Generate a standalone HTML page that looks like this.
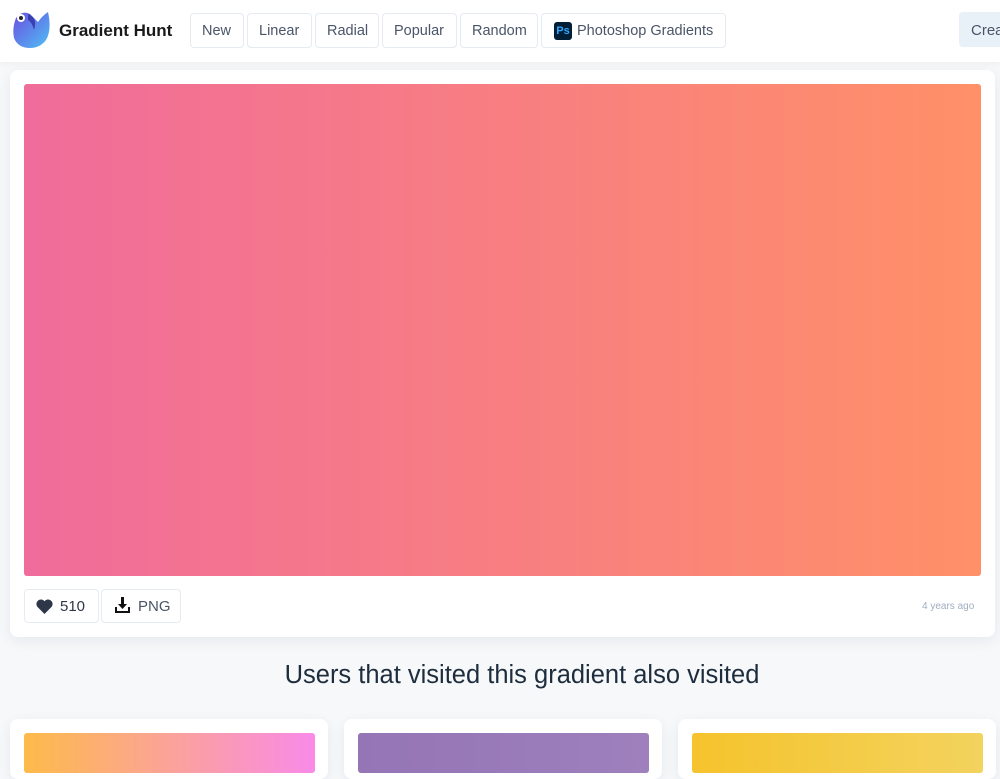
<!DOCTYPE html>
<html><head><style>
*{box-sizing:border-box;margin:0;padding:0}
body{width:1000px;height:758px;overflow:hidden;background:#f6f8fa;font-family:"Liberation Sans",sans-serif;position:relative}
.hdr{position:absolute;left:0;top:0;width:1000px;height:62px;background:#fff;box-shadow:0 2px 6px rgba(0,0,0,.04)}
.logo{position:absolute;left:12px;top:10px}
.brand{position:absolute;left:59px;top:21px;font-size:17px;font-weight:bold;color:#1a1a1a;white-space:nowrap}
.nb{position:absolute;top:13px;height:35px;border:1px solid #e5ebf1;border-radius:4px;color:#4a5568;font-size:14.5px;line-height:35px;padding:0 11px;background:#fff;white-space:nowrap}
.crea{position:absolute;left:959px;top:12px;width:60px;height:35px;background:#e8f0f8;border-radius:4px;color:#4a5568;font-size:15px;line-height:37px;padding-left:12px;white-space:nowrap}
.card{position:absolute;background:#fff;border-radius:8px;box-shadow:0 4px 14px rgba(30,40,60,.07)}
.g{position:absolute;border-radius:3px}
.btn{position:absolute;top:589px;height:34px;border:1px solid #e5ebf1;border-radius:4px;font-size:15px;line-height:34px;color:#2d3748}
h2{position:absolute;left:0;width:1044px;text-align:center;top:661px;font-size:25.5px;font-weight:normal;color:#1e2d3d;white-space:nowrap}
</style></head><body>
<div class="hdr">
<svg class="logo" width="38" height="38" viewBox="0 0 38 38"><defs><linearGradient id="lg" x1="0" y1="0" x2="1" y2="1"><stop offset="0" stop-color="#6a4ee0"/><stop offset="1" stop-color="#4fc0f5"/></linearGradient></defs><path d="M4 8 Q10 0 18 4 L26 12 Q30 6 36 2 Q40 20 34 30 Q28 38 18 38 Q6 38 2 28 Q0 18 4 8Z" fill="url(#lg)"/><circle cx="9" cy="8" r="4" fill="#fff"/><circle cx="9" cy="8" r="2" fill="#223"/><path d="M16 4 Q26 8 22 20 Q20 12 16 10Z" fill="#3a3fb0"/></svg>
<div class="brand">Gradient Hunt</div>
<div class="nb" style="left:190px;width:54px">New</div>
<div class="nb" style="left:247px;width:65px">Linear</div>
<div class="nb" style="left:315px;width:64px">Radial</div>
<div class="nb" style="left:382px;width:75px">Popular</div>
<div class="nb" style="left:460px;width:78px">Random</div>
<div class="nb" style="left:541px;width:185px;padding-left:35px">Photoshop Gradients</div>
<div style="position:absolute;left:554px;top:22px;width:18px;height:18px;background:#001e36;border-radius:3px;color:#31a8ff;font-size:11px;font-weight:bold;line-height:18px;text-align:center">Ps</div>
<div class="crea">Crea</div>
</div>
<div class="card" style="left:10px;top:70px;width:985px;height:567px"></div>
<div class="g" style="left:24px;top:84px;width:957px;height:492px;background:linear-gradient(90deg,#f06c9b,#ff9068)"></div>
<div class="btn" style="left:24px;width:75px"><svg style="position:absolute;left:11px;top:9px" width="17" height="15" viewBox="0 0 24 21"><path d="M12 21 L2 11 A6 6 0 0 1 12 3 A6 6 0 0 1 22 11Z" fill="#2d3748"/></svg><span style="position:absolute;left:35px">510</span></div>
<div class="btn" style="left:101px;width:80px;color:#4a5568"><svg style="position:absolute;left:12px;top:7px" width="17" height="17" viewBox="0 0 17 17"><path d="M7 0h3v7h3l-4.5 5L4 7h3z M1 10h2v4h11v-4h2v6H1z" fill="#111"/></svg><span style="position:absolute;left:36px">PNG</span></div>
<div style="position:absolute;left:922px;top:601px;font-size:10px;color:#a0aec0">4 years ago</div>
<h2>Users that visited this gradient also visited</h2>
<div class="card" style="left:10px;top:719px;width:318px;height:60px"></div>
<div class="g" style="left:24px;top:733px;width:291px;height:40px;background:linear-gradient(90deg,#fdbb4a,#f98ae8)"></div>
<div class="card" style="left:344px;top:719px;width:318px;height:60px"></div>
<div class="g" style="left:358px;top:733px;width:291px;height:40px;background:linear-gradient(90deg,#9575b5,#9e80bd)"></div>
<div class="card" style="left:678px;top:719px;width:318px;height:60px"></div>
<div class="g" style="left:692px;top:733px;width:291px;height:40px;background:linear-gradient(90deg,#f5c32c,#f3d35e)"></div>
</body></html>
